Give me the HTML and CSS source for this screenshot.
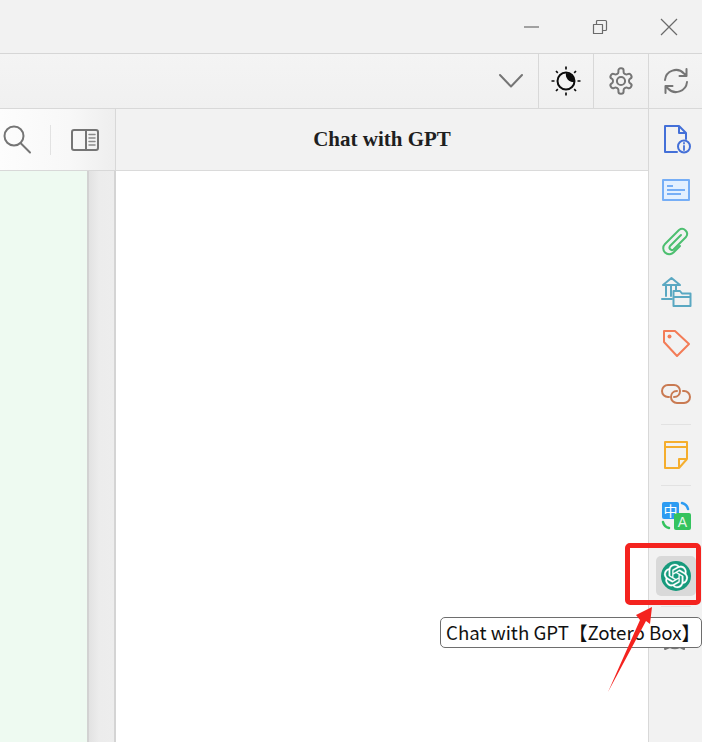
FILE: index.html
```html
<!DOCTYPE html>
<html lang="en">
<head>
<meta charset="utf-8">
<title>Chat with GPT</title>
<link rel="stylesheet" href="styles.css">
</head>
<body>
<div class="app">
  <header class="titlebar">
    <span class="win-btn"><svg width="16" height="16" viewBox="0 0 16 16"><path class="ln-thin" d="M1 8H16"/></svg></span>
    <span class="win-btn"><svg width="16" height="16" viewBox="0 0 16 16"><path class="ln-thin" d="M1.500 5.500H10.500V14.500H1.500ZM4.500 5.500V2.500a1 1 0 0 1 1-1H13.500a1 1 0 0 1 1 1V10.500a1 1 0 0 1-1 1H10.500"/></svg></span>
    <span class="win-btn"><svg width="16" height="16" viewBox="0 0 16 16"><path class="ln-thin" d="M0 0L16 16M16 0L0 16"/></svg></span>
  </header>
  <nav class="toolbar">
    <div class="tool tool-plain"><svg width="26" height="14" viewBox="0 0 26 14"><path class="ln-grey" d="M2 1L13 12.500L24 1"/></svg></div>
    <div class="tool"><svg width="32" height="32" viewBox="0 0 32 32"><circle class="ln-black" cx="16" cy="16" r="8.500"/><path class="fill-black" d="M16 8A8 8 0 0 1 24 17A7.500 7.500 0 0 1 16 8Z"/><path class="ln-ray" d="M16 1.500V4.500M16 27.500V30.500M1.500 16H4.500M27.500 16H30.500M6 6L7.800 7.800M24.200 24.200L26 26M6 26L7.800 24.200M24.200 7.800L26 6"/></svg></div>
    <div class="tool"><svg width="28" height="28" viewBox="0 0 24 24"><path class="ln-gear" d="M12.220 1h-.440a2 2 0 0 0-2 2v1.180a2 2 0 0 1-1 1.730l-.430.250a2 2 0 0 1-2 0l-.150-.080a2 2 0 0 0-2.730.730l-.220.380a2 2 0 0 0 .730 2.730l.150.100a2 2 0 0 1 1 1.720v.510a2 2 0 0 1-1 1.740l-.150.090a2 2 0 0 0-.730 2.730l.220.380a2 2 0 0 0 2.730.730l.150-.080a2 2 0 0 1 2 0l.430.250a2 2 0 0 1 1 1.730V21a2 2 0 0 0 2 2h.440a2 2 0 0 0 2-2v-1.180a2 2 0 0 1 1-1.730l.430-.250a2 2 0 0 1 2 0l.150.080a2 2 0 0 0 2.730-.730l.220-.390a2 2 0 0 0-.730-2.730l-.150-.080a2 2 0 0 1-1-1.740v-.500a2 2 0 0 1 1-1.740l.150-.090a2 2 0 0 0 .730-2.730l-.220-.380a2 2 0 0 0-2.730-.730l-.150.080a2 2 0 0 1-2 0l-.430-.250a2 2 0 0 1-1-1.730V3a2 2 0 0 0-2-2z"/><circle class="ln-gear" cx="12" cy="12" r="3.500"/></svg></div>
    <div class="tool"><svg width="26" height="26" viewBox="0 0 26 26"><path class="ln-grey" d="M2 12A11 11 0 0 1 21 5.500L23.500 8M23.500 1V8H16.500M24 14A11 11 0 0 1 5 20.500L2.500 18M2.500 25V18H9.500"/></svg></div>
  </nav>
  <main class="workspace">
    <section class="left-pane">
      <div class="left-head">
        <svg width="28" height="30" viewBox="0 0 28 30"><circle class="ln-grey" cx="11" cy="11" r="9.500"/><path class="ln-grey" d="M17.500 18L27 27.500"/></svg>
        <span class="head-sep"></span>
        <svg width="28" height="22" viewBox="0 0 28 22"><rect class="ln-grey" x="1" y="1" width="26" height="20" rx="2"/><path class="ln-grey" d="M15 1V21"/><path class="ln-grey-thin" d="M18 5.500H24M18 9H24M18 12.500H24M18 16H24"/></svg>
      </div>
      <div class="left-body">
        <div class="mint"></div>
        <div class="gutter"></div>
      </div>
    </section>
    <section class="chat-pane">
      <h1 class="chat-title">Chat with GPT</h1>
      <div class="chat-body"></div>
    </section>
    <aside class="sidebar">
      <div class="side-item"><svg width="26" height="28" viewBox="0 0 26 28"><path class="ln-doc" d="M14 27H2V1H16L23 8V14M16 1V8H23"/><circle class="ln-doc-disc" cx="21" cy="21.500" r="6"/><path class="ln-doc-i" d="M21 21V25M21 18V18.500"/></svg></div>
      <div class="side-item"><svg width="28" height="22" viewBox="0 0 28 22"><rect class="box-card" x="1" y="1" width="26" height="20"/><path class="ln-card" d="M5 7H11M5 11H23M5 15H19"/></svg></div>
      <div class="side-item"><svg width="28" height="28" viewBox="0 0 28 28"><path class="ln-clip" d="M19 8L8 19a2.500 2.500 0 0 0 3.500 3.500L24 10a5 5 0 0 0-7-7L3 17a6 6 0 0 0 8.500 8.500L18 19"/></svg></div>
      <div class="side-item"><svg width="30" height="30" viewBox="0 0 30 30"><path class="ln-lib" d="M2 8L10.500 1L19 8ZM5 8V19M10 8V19M15 8V13M1 22H11"/><path class="ln-lib" d="M12.500 29V14H19L21 16.500H29.500V29ZM12.500 20H29.500"/></svg></div>
      <div class="side-item"><svg width="28" height="28" viewBox="0 0 28 28"><path class="ln-tag" d="M2 2H13L27 15L15 27L2 13Z"/><circle class="fill-tag" cx="7.500" cy="7.500" r="2"/></svg></div>
      <div class="side-item"><svg width="30" height="20" viewBox="0 0 30 20"><path class="ln-link" d="M8 13H7a6 6 0 0 1 0-12H13a6 6 0 0 1 6 6c0 3-2 6-6 6"/><path class="ln-link" d="M22 7H23a6 6 0 0 1 0 12H16a6 6 0 0 1-6-6c0-3 2-6 6-6"/></svg></div>
      <div class="side-sep"></div>
      <div class="side-item"><svg width="24" height="28" viewBox="0 0 24 28"><path class="ln-note" d="M1 1H23V18L15 27H1ZM1 6H23M15 27V18H23"/></svg></div>
      <div class="side-sep"></div>
      <div class="side-item"><svg class="translate" width="30" height="30" viewBox="0 0 30 30"><path class="ln-blue" d="M21 2a8 8 0 0 1 6 6"/><path class="ln-green" d="M2 21a8 8 0 0 0 6 6"/><rect class="fill-blue" x="1" y="1" width="17" height="17" rx="2"/><rect class="fill-green" x="13" y="12" width="17" height="17" rx="2"/><text class="t-zh" x="9.500" y="14.500">中</text><text class="t-a" x="21.500" y="26">A</text></svg></div>
      <div class="side-item side-item-active"><svg width="30" height="30" viewBox="0 0 30 30"><circle class="fill-gpt" cx="15" cy="15" r="15"/><g transform="translate(3 3)"><path class="fill-white" d="M22.2819 9.8211a5.9847 5.9847 0 0 0-.5157-4.9108 6.0462 6.0462 0 0 0-6.5098-2.9A6.0651 6.0651 0 0 0 4.9807 4.1818a5.9847 5.9847 0 0 0-3.9977 2.9 6.0462 6.0462 0 0 0 .7427 7.0966 5.98 5.98 0 0 0 .511 4.9107 6.051 6.051 0 0 0 6.5146 2.9001A5.9847 5.9847 0 0 0 13.2599 24a6.0557 6.0557 0 0 0 5.7718-4.2058 5.9894 5.9894 0 0 0 3.9977-2.9001 6.0557 6.0557 0 0 0-.7475-7.0729zm-9.022 12.6081a4.4755 4.4755 0 0 1-2.8764-1.0408l.1419-.0804 4.7783-2.7582a.7948.7948 0 0 0 .3927-.6813v-6.7369l2.02 1.1686a.071.071 0 0 1 .038.052v5.5826a4.504 4.504 0 0 1-4.4945 4.4944zm-9.6607-4.1254a4.4708 4.4708 0 0 1-.5346-3.0137l.142.0852 4.783 2.7582a.7712.7712 0 0 0 .7806 0l5.8428-3.3685v2.3324a.0804.0804 0 0 1-.0332.0615L9.74 19.9502a4.4992 4.4992 0 0 1-6.1408-1.6464zM2.3408 7.8956a4.485 4.485 0 0 1 2.3655-1.9728V11.6a.7664.7664 0 0 0 .3879.6765l5.8144 3.3543-2.0201 1.1685a.0757.0757 0 0 1-.071 0l-4.8303-2.7865A4.504 4.504 0 0 1 2.3408 7.872zm16.5963 3.8558L13.1038 8.364 15.1192 7.2a.0757.0757 0 0 1 .071 0l4.8303 2.7913a4.4944 4.4944 0 0 1-.6765 8.1042v-5.6772a.79.79 0 0 0-.407-.667zm2.0107-3.0231l-.142-.0852-4.7735-2.7818a.7759.7759 0 0 0-.7854 0L9.409 9.2297V6.8974a.0662.0662 0 0 1 .0284-.0615l4.8303-2.7866a4.4992 4.4992 0 0 1 6.6802 4.66zM8.3065 12.863l-2.02-1.1638a.0804.0804 0 0 1-.038-.0567V6.0742a4.4992 4.4992 0 0 1 7.3757-3.4537l-.142.0805L8.704 5.459a.7948.7948 0 0 0-.3927.6813zm1.0976-2.3654l2.602-1.4998 2.6069 1.4998v2.9994l-2.5974 1.4997-2.6067-1.4997Z"/></g></svg></div>
      <div class="side-sep"></div>
      <div class="side-item"><svg width="28" height="28" viewBox="0 0 28 28"><path class="ln-grey" d="M2 14a11 11 0 1 1 6 10L3 26L4 20M10 24a14 14 0 0 0 8 0L22 26L22 21"/></svg></div>
    </aside>
  </main>

  <div class="tooltip">Chat with GPT【Zotero Box】</div>
  <div class="mark-box"></div>
  <svg class="mark-arrow" width="60" height="100" viewBox="0 0 60 100"><polygon class="fill-red" points="46,2 44,19 40,16 2,87 34,15 30,10"/></svg>
</div>
</body>
</html>
```
FILE: styles.css
```css
* { box-sizing: border-box; }
html, body { margin: 0; height: 100%; overflow: hidden; }
body { background: #f2f2f2; font-family: "Liberation Sans", sans-serif; }

.app { position: relative; display: flex; flex-direction: column; width: 702px; height: 742px; overflow: hidden; }

.titlebar { display: flex; justify-content: flex-end; align-items: center; flex: 0 0 54px; padding: 0 25px 0 0; background: #f2f2f2; border-bottom: 1px solid #d6d6d6; gap: 53px; }
.win-btn { display: flex; }

.toolbar { display: flex; justify-content: flex-end; flex: 0 0 55px; background: linear-gradient(#f4f4f4, #f0f0f0); border-bottom: 1px solid #d8d8d8; }
.tool { display: flex; align-items: center; justify-content: center; width: 55px; border-left: 1px solid #d8d8d8; }
.tool-plain { border-left: 0; }
.tool:last-child { width: 54px; }

.workspace { display: flex; flex: 1; min-height: 0; }

.left-pane { display: flex; flex-direction: column; flex: 0 0 116px; }
.left-head { display: flex; align-items: center; flex: 0 0 62px; gap: 18px; padding: 0 0 0 3px; background: linear-gradient(90deg, #fdfdfd, #f8f8f8 60%, #eeeeee); border-right: 1px solid #d8d8d8; border-bottom: 1px solid #d8d8d8; }
.head-sep { width: 1px; height: 30px; background: #e2e2e2; margin-left: 1px; margin-right: 2px; }
.left-body { display: flex; flex: 1; }
.mint { flex: 0 0 87px; background: #eefaf1; }
.gutter { flex: 1; background: linear-gradient(90deg, #e2e2e2, #ececec 40%, #ededed); border-left: 2px solid #d2d2d2; border-right: 2px solid #d4d4d4; }

.chat-pane { display: flex; flex-direction: column; flex: 1; min-width: 0; }
.chat-title { display: flex; align-items: center; justify-content: center; flex: 0 0 62px; margin: 0; font: bold 21px "Liberation Serif", serif; color: #1f1f1f; background: #f2f2f2; border-bottom: 1px solid #dadada; }
.chat-body { flex: 1; background: #fff; }

.sidebar { display: flex; flex-direction: column; align-items: center; flex: 0 0 54px; padding-top: 10px; background: #f2f2f2; border-left: 1px solid #d8d8d8; }
.side-item { display: flex; align-items: center; justify-content: center; flex: 0 0 40px; width: 40px; margin-bottom: 11px; border-radius: 5px; }
.side-item-active { background: #d9d9d9; margin-top: 9px; }
.side-sep { flex: 0 0 1px; width: 30px; background: #e2e2e2; margin: -1px 0 10px; }

svg { display: block; overflow: visible; fill: none; }
svg path, svg circle, svg rect { stroke-linecap: round; stroke-linejoin: round; }
.ln-thin { stroke: #6b6b6b; stroke-width: 1.200; stroke-linecap: butt; }
.ln-grey { stroke: #757575; stroke-width: 2; }
.ln-grey-thin { stroke: #8a8a8a; stroke-width: 1.500; }
.ln-gear { stroke: #757575; stroke-width: 1.700; }
.ln-black { stroke: #0c0c0c; stroke-width: 2; }
.ln-ray { stroke: #0c0c0c; stroke-width: 1.700; stroke-linecap: butt; }
.fill-black { fill: #0c0c0c; }
.ln-doc { stroke: #4470d8; stroke-width: 2; }
.ln-doc-disc { stroke: #4470d8; stroke-width: 2; fill: #f2f2f2; }
.ln-doc-i { stroke: #4470d8; stroke-width: 1.800; }
.box-card { fill: #e4f0ff; stroke: #76aef6; stroke-width: 2; }
.ln-card { stroke: #76aef6; stroke-width: 2; stroke-linecap: butt; }
.ln-clip { stroke: #4dbf70; stroke-width: 2; }
.ln-lib { stroke: #5aa8c2; stroke-width: 2; }
.ln-tag { stroke: #f37c57; stroke-width: 2; }
.fill-tag { fill: #f37c57; }
.ln-link { stroke: #c97a52; stroke-width: 2; }
.ln-note { stroke: #f5ae2e; stroke-width: 2; }
.fill-blue { fill: #2d9cf2; }
.fill-green { fill: #34c35e; }
.ln-blue { stroke: #2d9cf2; stroke-width: 2.500; }
.ln-green { stroke: #34c35e; stroke-width: 2.500; }
.t-zh { font: 14px "Noto Sans CJK SC", sans-serif; fill: #fff; text-anchor: middle; }
.t-a { font: 14px "Liberation Sans", sans-serif; fill: #e4f7ea; text-anchor: middle; }
.fill-gpt { fill: #169a7c; }
.fill-white { fill: #fff; stroke: #fff; stroke-width: .25; }
.fill-red { fill: #f4231f; }

.tooltip { position: absolute; left: 440px; top: 617px; width: 262px; height: 31px; padding-left: 5px; font: 18.700px/28px "Noto Sans CJK SC", sans-serif; color: #111; background: #fff; border: 1px solid #6e6e6e; border-radius: 5px; white-space: nowrap; }
.mark-box { position: absolute; left: 625px; top: 543px; width: 76px; height: 62px; border: 5px solid #f4231f; border-radius: 5px; }
.mark-arrow { position: absolute; left: 606px; top: 605px; }
```
